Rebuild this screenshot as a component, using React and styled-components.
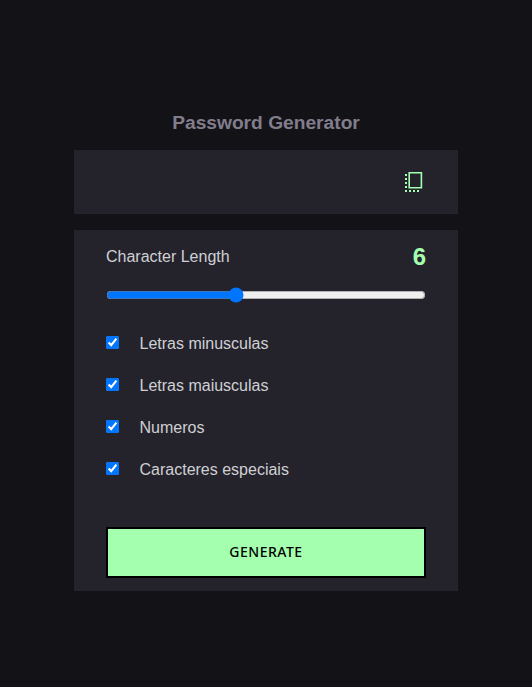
import React, { useState } from "react";
import styled, { createGlobalStyle } from "styled-components";

const GlobalStyle = createGlobalStyle`
  * { box-sizing: border-box; margin: 0; padding: 0; }
  body { background: #131217; font-family: "Liberation Sans", Arial, sans-serif; }
`;

const Page = styled.main`
  min-height: 687px;
  display: flex;
  flex-direction: column;
  align-items: center;
  padding-top: 112px;
`;

const Title = styled.h1`
  font-size: 19.2px;
  line-height: 22px;
  font-weight: 700;
  color: #817d8c;
  margin-bottom: 16px;
`;

const Display = styled.section`
  width: 384px;
  height: 64px;
  background: #24232b;
  display: flex;
  align-items: center;
  justify-content: flex-end;
  padding: 0 32px;
  margin-bottom: 16px;
`;

const CopyButton = styled.button`
  display: flex;
  width: 24px;
  height: 24px;
  border: 0;
  background: none;
  color: #a4ffaf;
  cursor: pointer;
`;

const Panel = styled.section`
  width: 384px;
  height: 361px;
  background: #24232b;
  padding: 13px 32px;
  color: #cfd0d4;
  font-size: 16px;
`;

const LengthRow = styled.div`
  display: flex;
  align-items: center;
  justify-content: space-between;
  height: 27px;
`;

const LengthValue = styled.strong`
  font-size: 24px;
  line-height: 27px;
  color: #a4ffaf;
`;

const Slider = styled.input`
  display: block;
  width: 320px;
  height: 16px;
  margin-top: 17px;
  accent-color: #0075ff;
`;

const Options = styled.div`
  display: grid;
  grid-auto-rows: 18px;
  row-gap: 24px;
  margin-top: 32px;
`;

const Option = styled.label`
  display: flex;
  align-items: flex-start;
  gap: 20.5px;
  line-height: 18px;
`;

const Checkbox = styled.input`
  width: 13px;
  height: 13px;
  margin-top: 1px;
  accent-color: #0075ff;
`;

const GenerateButton = styled.button`
  display: block;
  width: 320px;
  height: 51px;
  margin-top: 48px;
  padding-bottom: 2px;
  border: 2px solid #000;
  background: #a4ffaf;
  color: #000;
  font: 500 14px "Noto Sans", sans-serif;
  letter-spacing: 0.5px;
  cursor: pointer;
`;

const labels = ["Letras minusculas", "Letras maiusculas", "Numeros", "Caracteres especiais"];

function CopyIcon() {
  return (
    <svg width="24" height="24" viewBox="0 0 24 24" fill="currentColor">
      <path fillRule="evenodd" d="M6.4 2H20.2V18.4H6.4ZM8 3.5V17H18.6V3.5Z" />
      <path d="M3 4h2v2h-2zM3 8h2v2h-2zM3 12h2v2h-2zM3 16h2v2h-2zM3 20h2v2h-2zM7 20h2v2h-2zM11 20h2v2h-2zM15 20h2v2h-2z" />
    </svg>
  );
}

export default function App() {
  const [length, setLength] = useState(6);
  return (
    <Page>
      <GlobalStyle />
      <Title>Password Generator</Title>
      <Display>
        <CopyButton aria-label="Copy"><CopyIcon /></CopyButton>
      </Display>
      <Panel>
        <LengthRow>
          <span>Character Length</span>
          <LengthValue>{length}</LengthValue>
        </LengthRow>
        <Slider type="range" min="0" max="15" value={length} onChange={(e) => setLength(Number(e.target.value))} />
        <Options>
          {labels.map((label) => (
            <Option key={label}>
              <Checkbox type="checkbox" defaultChecked />
              <span>{label}</span>
            </Option>
          ))}
        </Options>
        <GenerateButton>GENERATE</GenerateButton>
      </Panel>
    </Page>
  );
}
